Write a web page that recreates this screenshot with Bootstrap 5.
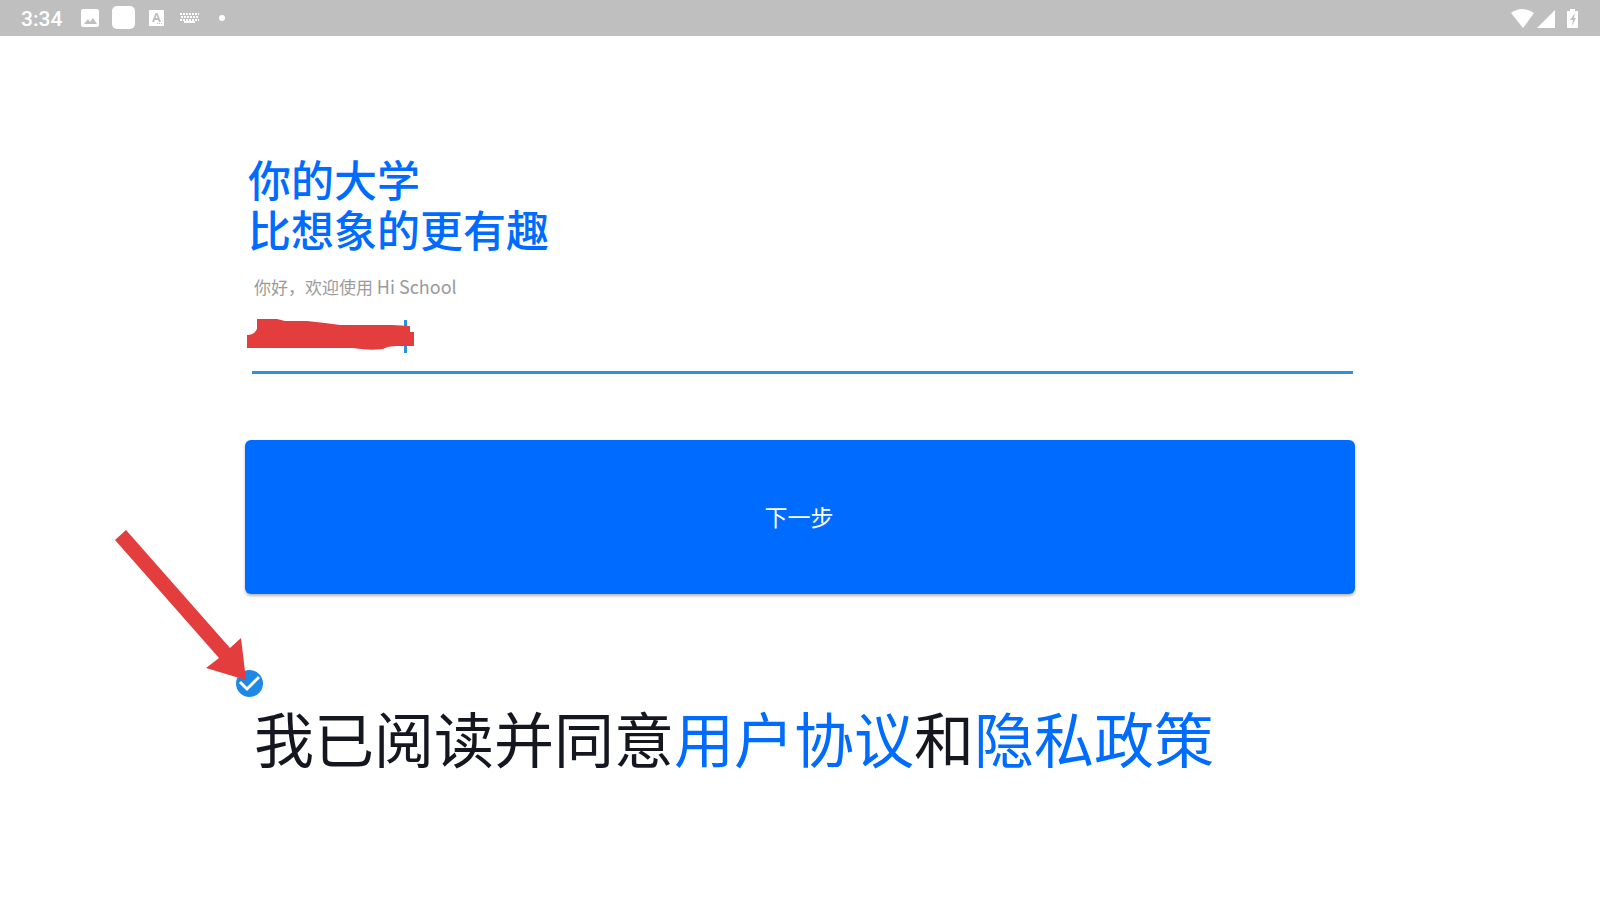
<!DOCTYPE html>
<html lang="zh-CN">
<head>
<meta charset="utf-8">
<meta name="viewport" content="width=device-width, initial-scale=1">
<title>Hi School</title>
<link href="https://cdn.jsdelivr.net/npm/bootstrap@5.3.0/dist/css/bootstrap.min.css" rel="stylesheet">
<style>
  body { font-family: "Noto Sans CJK SC", sans-serif; background: #fff; color: #14171f; }
  .status-bar { height: 36px; padding: 0 20px 0 21px; background: #bfbfbf; color: #fff; }
  .status-bar svg { display: block; fill: #fff; }
  .clock { font: 500 21px/36px Roboto, sans-serif; margin-right: 19px; padding-top: 1px; }
  .login-panel { max-width: 1110px; padding-top: 117px; }
  .slogan { font-size: 43px; line-height: 50px; font-weight: 500; color: #006cff; padding-left: 3px; margin-bottom: 21px; }
  .welcome { font-size: 17px; line-height: 26px; color: #9b9b9b; padding-left: 9px; margin-bottom: 12px; }
  .welcome .app-name { font-size: 18px; line-height: 20px; }
  .phone-field { margin: 0 2px 66px 7px; }
  .phone-field .form-control { height: 62px; padding: 0; border: 0; border-bottom: 3px solid #2f90e0; border-radius: 0; box-shadow: none; background: none; }
  .caret-bar { top: 8px; left: 152px; width: 3px; height: 33px; background: #2f90e0; }
  .scribble { top: 7px; left: -5px; }
  .btn-next { height: 154px; font-size: 23px; padding: 0 2px 2px 0; border: 0; border-radius: 6px; background: #006cff; color: #fff; box-shadow: 0 2px 3px rgba(0,0,0,.28); margin-bottom: 76px; }
  .btn-next:hover { background: #0062e8; color: #fff; }
  .consent { margin-left: -9px; }
  .consent .form-check-input { float: none; display: block; width: 27px; height: 27px; margin: 0; border: 0; border-radius: 50%; background-color: #1e88e5; }
  .consent .form-check-input:checked { background-color: #1e88e5; background-size: 100% 100%; background-image: url("data:image/svg+xml,%3Csvg xmlns='http://www.w3.org/2000/svg' viewBox='0 0 27 27'%3E%3Cpath d='M4 12l7 7L23 7' fill='none' stroke='%23fff' stroke-width='3'/%3E%3C/svg%3E"); }
  .consent-text { font-size: 60px; line-height: 80px; padding-left: 18px; }
  .consent-text a { color: #006cff; text-decoration: none; }
  .pointer-arrow { left: -121px; top: -140px; pointer-events: none; }
</style>
</head>
<body>
<header class="status-bar d-flex align-items-center justify-content-between">
  <div class="d-flex align-items-center">
    <span class="clock">3:34</span>
    <svg class="me-2" width="23" height="18" viewBox="0 0 23 18"><path fill-rule="evenodd" d="M2 0h14q2 0 2 2v14q0 2-2 2H2q-2 0-2-2V2q0-2 2-2zM3 15h13l-4-6-3 4-2-3z"/></svg>
    <svg width="37" height="24" viewBox="0 0 37 24"><rect width="23" height="23" rx="5"/></svg>
    <svg width="31" height="16" viewBox="0 0 31 16"><path fill-rule="evenodd" d="M0 0h15v16H0zM3 12h2l1-2h3l1 2h2L8.500 3h-2zM6.600 8l1-3 1 3zM8 13v1h1v-1zm2 0v1h1v-1zm2 0v1h1v-1z"/></svg>
    <svg width="38" height="11" viewBox="0 0 38 11"><path fill="none" stroke="#fff" stroke-width="2" stroke-dasharray="2 1" d="M0 1h19M1 4h18M0 7h19"/><path d="M4 8h11v2H4z"/></svg>
    <svg width="8" height="8" viewBox="0 0 8 8"><circle cx="4" cy="4" r="3"/></svg>
  </div>
  <svg width="70" height="22" viewBox="0 0 70 22"><path d="M1 6Q12-2 24 6L13 21z"/><path d="M27 21L45 3v18z"/><path fill-rule="evenodd" d="M57 4h3V2h5v2h3v17H57V4zM65 6l-5 7h3l-1 6 4-8h-2z"/></svg>
</header>

<main class="login-panel mx-auto">
  <h1 class="slogan">你的大学<br>比想象的更有趣</h1>
  <p class="welcome">你好，欢迎使用 <span class="app-name">Hi School</span></p>
  <form>
    <div class="phone-field position-relative">
      <input class="form-control" type="tel" aria-label="手机号">
      <span class="caret-bar position-absolute"></span>
      <svg class="scribble position-absolute" width="168" height="34" viewBox="0 0 168 34"><path fill="#e43d3d" d="M0 16q7 0 10-6V0h20l8 2h22l18 2 15 2h52l18 1v6h4v14h-17q-9 0-14 3-13 2-30-1H0z"/></svg>
    </div>
    <button class="btn btn-next w-100 d-block" type="button">下一步</button>
    <div class="consent position-relative">
      <input class="form-check-input" type="checkbox" id="agree" checked>
      <label class="consent-text d-block" for="agree">我已阅读并同意<a href="#">用户协议</a>和<a href="#">隐私政策</a></label>
      <svg class="pointer-arrow position-absolute" width="132" height="152" viewBox="0 0 132 152"><path fill="#e43d3d" d="M0 10L11 0l104 118 11-10 5 42-40-12 13-10z"/></svg>
    </div>
  </form>
</main>
<script src="https://cdn.jsdelivr.net/npm/bootstrap@5.3.0/dist/js/bootstrap.bundle.min.js"></script>
</body>
</html>
